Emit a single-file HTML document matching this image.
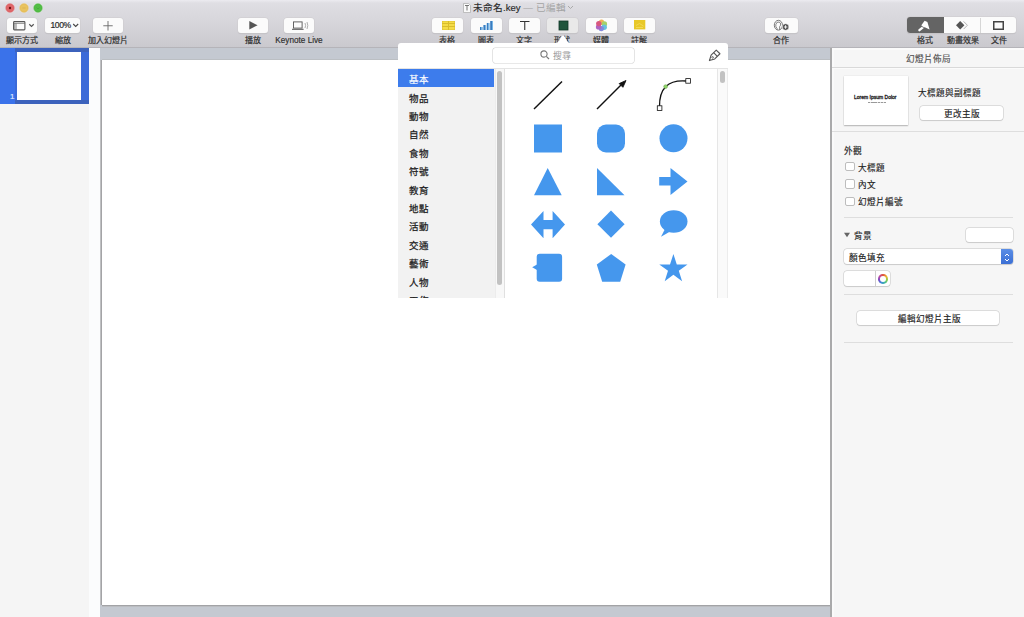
<!DOCTYPE html>
<html lang="zh-TW"><head><meta charset="utf-8">
<style>
*{margin:0;padding:0;box-sizing:border-box}
html,body{width:1024px;height:617px;overflow:hidden;background:#c4c9d1;font-family:"Liberation Sans",sans-serif;color:#2b2b2b}
.a{position:absolute}
#tb{left:0;top:0;width:1024px;height:48px;background:linear-gradient(#eceBf0,#dfdee3 3px,#d7d6db 45%,#cac9ce);border-bottom:1px solid #b5b4b9}
.tl{width:10px;height:10px;border-radius:50%;top:3px}
.btn{background:#fbfbfb;border-radius:3px;box-shadow:0 0 0 0.5px #cfcdd0,0 0.5px 1px rgba(0,0,0,.12);height:15px;top:18px}
.lab{font-size:8px;letter-spacing:.4px;top:33.5px;text-align:center;color:#2e2e2e;-webkit-text-stroke:.2px #2e2e2e;white-space:nowrap}
#side{left:0;top:48px;width:89px;height:569px;background:#f5f5f5}
#strip{left:89px;top:48px;width:11px;height:569px;background:#fbfcfd}
#slide{left:101.5px;top:60px;width:729.5px;height:545px;background:#fff;box-shadow:-1px 0 0 #a4a4a6,-1.8px 0 0 #bdbdbf,0 1px 0 #a2a3a6,0 1.8px 0 #b8babd,0 -1px 0 #bbbfc3}
#rp{left:830px;top:48px;width:194px;height:569px;background:#f6f6f6;border-left:2px solid #aaaaab;box-shadow:inset 2px 0 0 #fafafa}
#pop{left:398px;top:43px;width:330px;height:255px;background:#fff;border-radius:3px 3px 0 0}
.li{left:11px;font-size:9.5px;color:#1e1e1e;-webkit-text-stroke:.25px #1e1e1e}
.sep{height:1px;background:#dedede}
.rt{font-size:8.6px;color:#222;white-space:nowrap;-webkit-text-stroke:.15px #222}
.cb{width:9.5px;height:9.5px;background:#fff;border:.8px solid #bdbdbd;border-radius:2px;left:13.2px}
.pb{background:#fff;border-radius:3px;box-shadow:0 0 0 .5px #c6c6c6,0 .5px 1px rgba(0,0,0,.15)}
</style></head><body>
<!-- toolbar -->
<div id="tb" class="a">
  <svg class="a" style="left:4px;top:2px" width="40" height="12" viewBox="0 0 40 12">
    <circle cx="6" cy="6" r="4.9" fill="#f2c4c6" opacity=".6"/><circle cx="6" cy="6" r="4.2" fill="#e0676a" stroke="#cf5256" stroke-width=".4"/><circle cx="6" cy="6" r="1.2" fill="#6e1414"/>
    <circle cx="20" cy="6" r="4.9" fill="#f4e2b8" opacity=".6"/><circle cx="20" cy="6" r="4.2" fill="#e9c35e" stroke="#d9ac44" stroke-width=".4"/><path d="M18.4 6H21.6" stroke="#b88a2a" stroke-width=".6" opacity=".45"/>
    <circle cx="34" cy="6" r="4.9" fill="#c4eabc" opacity=".6"/><circle cx="34" cy="6" r="4.2" fill="#52bd45" stroke="#42a836" stroke-width=".4"/><path d="M32.6 5.6L34 7 35.4 5.6" fill="none" stroke="#2f7d24" stroke-width=".6" opacity=".45"/>
  </svg>
  <div class="a btn" style="left:7px;width:30px"></div>
  <div class="a lab" style="left:2px;width:40px;letter-spacing:0">顯示方式</div>
  <div class="a btn" style="left:45px;width:35px"></div>
  <div class="a lab" style="left:43px;width:40px">縮放</div>
  <div class="a btn" style="left:93px;width:30px"></div>
  <div class="a lab" style="left:83px;width:50px;letter-spacing:.1px">加入幻燈片</div>

  <div class="a btn" style="left:238px;width:30px"></div>
  <div class="a lab" style="left:233px;width:40px">播放</div>
  <div class="a btn" style="left:284px;width:30px"></div>
  <div class="a lab" style="left:269px;width:60px;letter-spacing:0;font-size:8.2px;top:35.5px;-webkit-text-stroke:.15px #2a2a2a">Keynote Live</div>

  <div class="a btn" style="left:432px;width:31px"></div>
  <div class="a lab" style="left:427px;width:40px">表格</div>
  <div class="a btn" style="left:471px;width:31px"></div>
  <div class="a lab" style="left:466px;width:40px">圖表</div>
  <div class="a btn" style="left:509px;width:31px"></div>
  <div class="a lab" style="left:504px;width:40px">文字</div>
  <div class="a btn" style="left:547px;width:31px;background:#e9e9e9"></div>
  <div class="a lab" style="left:542px;width:40px">形狀</div>
  <div class="a btn" style="left:586px;width:31px"></div>
  <div class="a lab" style="left:581px;width:40px">媒體</div>
  <div class="a btn" style="left:624px;width:31px"></div>
  <div class="a lab" style="left:619px;width:40px">註解</div>

  <div class="a btn" style="left:765px;width:33px"></div>
  <div class="a lab" style="left:761px;width:40px">合作</div>

  <div class="a btn" style="left:907px;width:109px;top:17px;height:16px"></div>
  <div class="a" style="left:907px;top:17px;width:37px;height:16px;background:#646464;border-radius:3px 0 0 3px"></div>
  <div class="a lab" style="left:905px;width:40px">格式</div>
  <div class="a lab" style="left:942.5px;width:40px;letter-spacing:0">動畫效果</div>
  <div class="a lab" style="left:979px;width:40px">文件</div>


  <svg class="a" style="left:13px;top:21px" width="22" height="10" viewBox="0 0 22 10"><rect x=".6" y=".6" width="11.3" height="8.3" rx=".8" fill="none" stroke="#555" stroke-width="1.1"/><path d="M.6 2.4H11.9M3.1 2.4V8.9M1.8 2.4V8.9" stroke="#666" stroke-width=".7"/><path d="M16.3 3.3L18.5 5.4 20.7 3.3" fill="none" stroke="#555" stroke-width="1.2"/></svg>
  <div class="a" style="left:50.5px;top:20px;font-size:8.6px;color:#2a2a2a;-webkit-text-stroke:.2px #2a2a2a;letter-spacing:-.45px">100%</div>
  <svg class="a" style="left:71.5px;top:23px" width="8" height="5" viewBox="0 0 8 5"><path d="M1.2 1L3.7 3.4 6.2 1" fill="none" stroke="#444" stroke-width="1.1"/></svg>
  <svg class="a" style="left:102.5px;top:21px" width="10" height="10" viewBox="0 0 10 10"><path d="M5 0V9.5M.3 4.75H9.7" stroke="#666" stroke-width=".9"/></svg>
  <svg class="a" style="left:249px;top:21px" width="10" height="9" viewBox="0 0 10 9"><path d="M.3 0L8.6 4.2 .3 8.4Z" fill="#555"/></svg>
  <svg class="a" style="left:291px;top:21px" width="20" height="10" viewBox="0 0 20 10"><rect x="2.5" y=".9" width="8.6" height="6.2" fill="none" stroke="#555" stroke-width=".9"/><path d="M1 8.3H12.6" stroke="#555" stroke-width="1"/><path d="M14 2Q15.2 4.5 14 7M16 1Q17.6 4.5 16 8" fill="none" stroke="#999" stroke-width=".8"/></svg>
  <div class="a" style="left:441.5px;top:20.5px;width:13px;height:9px;background:#f4dc48;box-shadow:inset 0 0 0 .5px #dcc030"></div>
  <div class="a" style="left:441.5px;top:23.3px;width:13px;height:.7px;background:#d9bc2c"></div>
  <div class="a" style="left:441.5px;top:26.3px;width:13px;height:.7px;background:#d9bc2c"></div>
  <div class="a" style="left:447.5px;top:20.5px;width:.7px;height:9px;background:#d9bc2c"></div>
  <svg class="a" style="left:480px;top:20.5px" width="13" height="9" viewBox="0 0 13 9"><defs><linearGradient id="bg1" x1="0" x2="1"><stop offset="0" stop-color="#3a7cc0"/><stop offset=".5" stop-color="#3a7cc0"/><stop offset=".5" stop-color="#78b6e6"/></linearGradient></defs><rect x="0" y="6" width="2.8" height="3" fill="url(#bg1)"/><rect x="3.4" y="4" width="2.8" height="5" fill="url(#bg1)"/><rect x="6.8" y="2" width="2.8" height="7" fill="url(#bg1)"/><rect x="10.2" y="0" width="2.8" height="9" fill="url(#bg1)"/></svg>
  <svg class="a" style="left:520px;top:20.5px" width="10" height="9" viewBox="0 0 10 9"><path d="M0 .55H9.5M4.75 .55V9" stroke="#333" stroke-width="1.1"/></svg>
  <svg class="a" style="left:558px;top:20px" width="11" height="11" viewBox="0 0 11 11"><rect x="1" y="1" width="9" height="9" fill="#1f553c" stroke="#0f3626" stroke-width=".8"/></svg>
  <svg class="a" style="left:595px;top:18.5px" width="13" height="13" viewBox="0 0 13 13"><g opacity=".85"><circle cx="6.5" cy="3.3" r="2.7" fill="#f0a63a"/><circle cx="9.4" cy="5" r="2.7" fill="#98cc50"/><circle cx="9.2" cy="8.2" r="2.7" fill="#4fb8d8"/><circle cx="6.3" cy="9.6" r="2.7" fill="#6f78d8"/><circle cx="3.6" cy="7.9" r="2.7" fill="#a24ab8"/><circle cx="3.8" cy="4.6" r="2.7" fill="#d23c6a"/></g></svg>
  <svg class="a" style="left:634px;top:20.3px" width="12" height="10" viewBox="0 0 12 10"><rect x="0" y="0" width="11.3" height="9.4" fill="#e8c828"/><path d="M2 5.5L5.5 3.5 9.5 6M2 7.5H9" fill="none" stroke="#f4dc60" stroke-width=".8"/></svg>
  <svg class="a" style="left:772px;top:19px" width="18" height="13" viewBox="0 0 18 13"><ellipse cx="6.4" cy="6.2" rx="4.1" ry="4.9" fill="none" stroke="#6a6a6a" stroke-width=".9"/><path d="M5 10.8V9.3Q3.4 8 3.8 5.6Q4.4 2.6 7 3Q9 3.5 8.6 6Q8.4 7 7.6 7.6V10.9" fill="none" stroke="#6a6a6a" stroke-width=".8"/><circle cx="13.6" cy="8" r="3.3" fill="#4a4a4a" stroke="#fff" stroke-width=".6"/><path d="M13.6 6.2V9.8M11.8 8H15.4" stroke="#fff" stroke-width=".9"/></svg>
  <svg class="a" style="left:917px;top:19px" width="14" height="13" viewBox="0 0 14 13"><path d="M4.2 6.4L7.6 1.8 10.4 3 12.6 10.6 8.8 8.8Z" fill="#fff"/><path d="M6.8 7.6L2.4 11.2" stroke="#fff" stroke-width="2.3" stroke-linecap="round"/><path d="M4.4 7.2L9.6 10.2" stroke="#646464" stroke-width=".8"/></svg>
  <svg class="a" style="left:954px;top:19px" width="16" height="13" viewBox="0 0 16 13"><path d="M6.2 2L10.4 6.25 6.2 10.5 2 6.25Z" fill="#555"/><path d="M9.6 2.4L13.4 6.25 9.6 10.1" fill="none" stroke="#aaa" stroke-width=".9"/></svg>
  <svg class="a" style="left:993px;top:20.5px" width="11" height="9" viewBox="0 0 11 9"><rect x=".75" y=".75" width="9.5" height="7.5" fill="none" stroke="#444" stroke-width="1.5"/></svg>
  <div class="a" style="left:980px;top:17.5px;width:.7px;height:15px;background:#d6d6d6"></div>
  <svg class="a" style="left:463px;top:3px" width="8" height="10" viewBox="0 0 8 10"><path d="M.5 .5H5.5L7.5 2.5V9.5H.5Z" fill="#fafafa" stroke="#aaa" stroke-width=".7"/><path d="M2 2.5H6M4 2.5V7.5" stroke="#666" stroke-width=".9"/></svg>
  <div class="a" style="left:473px;top:0px;font-size:9.6px;color:#2a2a2a;white-space:nowrap;-webkit-text-stroke:.15px #2a2a2a">未命名.key <span style="color:#a4a4a4;-webkit-text-stroke:0">— 已編輯</span></div>
  <svg class="a" style="left:567px;top:5px" width="7" height="5" viewBox="0 0 7 5"><path d="M1 1L3.5 3.5 6 1" fill="none" stroke="#aaa" stroke-width="1"/></svg>
</div>

<div id="side" class="a">
  <div class="a" style="left:0;top:0;width:89px;height:56px;background:#3a72ea"></div>
  <div class="a" style="left:15px;top:0;width:74px;height:56px;background:#3b6ad8"></div>
  <div class="a" style="left:15px;top:0;width:74px;height:4px;background:#3c62bc"></div>
  <div class="a" style="left:15px;top:52px;width:74px;height:4px;background:#3c62bc"></div>
  <div class="a" style="left:17px;top:4px;width:64px;height:48px;background:#fff"></div>
  <div class="a" style="left:10px;top:44px;font-size:8px;color:#dfe8ff;-webkit-text-stroke:.2px #dfe8ff">1</div>
</div>
<div id="strip" class="a"></div>
<div id="slide" class="a"></div>

<div id="rp" class="a">
  <div class="a rt" style="left:0;width:193px;top:4px;text-align:center;color:#666">幻燈片佈局</div>
  <div class="a" style="left:0;top:0;width:193px;height:1.5px;background:#fbfbfb"></div>
  <div class="a sep" style="left:0;top:18.7px;width:193px;background:#d9d9d9"></div>
  <div class="a" style="left:0;top:19.7px;width:193px;height:1px;background:#fbfbfb"></div>
  <div class="a" style="left:12px;top:28px;width:63.5px;height:48.5px;background:#fff;box-shadow:0 0 1px rgba(0,0,0,.18),0 1px 1.2px rgba(0,0,0,.25)"></div>
  <div class="a" style="left:22px;top:45.5px;font-size:5px;color:#1a1a1a;white-space:nowrap;-webkit-text-stroke:.3px #1a1a1a">Lorem Ipsum Dolor</div>
  <div class="a" style="left:35.5px;top:54.2px;width:18px;height:1.1px;background:repeating-linear-gradient(90deg,#999 0 2.5px,#ddd 2.5px 3.2px)"></div>
  <div class="a rt" style="left:85.5px;top:38px">大標題與副標題</div>
  <div class="a pb" style="left:87.6px;top:57.8px;width:83.7px;height:14px"></div>
  <div class="a rt" style="left:88px;width:84px;top:59px;text-align:center">更改主版</div>
  <div class="a sep" style="left:0;top:83.3px;width:193px"></div>
  <div class="a rt" style="left:12px;top:96px">外觀</div>
  <div class="a cb" style="top:113.9px"></div>
  <div class="a rt" style="left:26px;top:113px">大標題</div>
  <div class="a cb" style="top:131.2px"></div>
  <div class="a rt" style="left:26px;top:130px">內文</div>
  <div class="a cb" style="top:148.6px"></div>
  <div class="a rt" style="left:26px;top:147px">幻燈片編號</div>
  <div class="a sep" style="left:12px;top:168.5px;width:169px"></div>
  <svg class="a" style="left:12px;top:183.5px" width="6" height="6" viewBox="0 0 7 6"><path d="M0 .5H7L3.5 5.5Z" fill="#666"/></svg>
  <div class="a rt" style="left:22px;top:181px">背景</div>
  <div class="a pb" style="left:133.7px;top:180.1px;width:47px;height:14.3px"></div>
  <div class="a pb" style="left:12px;top:201.2px;width:168.7px;height:15.3px"></div>
  <div class="a" style="left:168.7px;top:201.2px;width:12px;height:15.3px;background:linear-gradient(#5b8ee6,#3b6fd4);border-radius:0 3px 3px 0"></div>
  <svg class="a" style="left:170.7px;top:203.5px" width="8" height="11" viewBox="0 0 8 11"><path d="M2 4L4 2 6 4M2 7L4 9 6 7" fill="none" stroke="#fff" stroke-width="1"/></svg>
  <div class="a rt" style="left:17px;top:203px">顏色填充</div>
  <div class="a pb" style="left:11.6px;top:223.3px;width:46.4px;height:15px"></div>
  <div class="a" style="left:43.4px;top:223.3px;width:.7px;height:15px;background:#cfcfcf"></div>
  <div class="a" style="left:46.3px;top:226.2px;width:9.6px;height:9.6px;border-radius:50%;background:conic-gradient(#e0503a,#f0b030,#8fd04a,#40b8a0,#3a8ad8,#7a4ac8,#c04aa0,#e0503a)"></div><div class="a" style="left:48.1px;top:228px;width:6px;height:6px;border-radius:50%;background:#fff"></div>
  <div class="a sep" style="left:12px;top:246px;width:169px"></div>
  <div class="a pb" style="left:25.2px;top:262.5px;width:141.8px;height:14.8px"></div>
  <div class="a rt" style="left:26px;width:142px;top:264px;text-align:center">編輯幻燈片主版</div>
  <div class="a sep" style="left:12px;top:294px;width:169px"></div>
</div>

<svg class="a" style="left:553px;top:34px;z-index:2" width="20" height="10" viewBox="0 0 20 10"><path d="M0 10Q5 10 7.5 4Q10 -1 12.5 4Q15 10 20 10Z" fill="#fff"/></svg>
<div id="pop" class="a">
  <div class="a pb" style="left:95px;top:5px;width:141px;height:14.5px;border-radius:2.5px;box-shadow:0 0 0 .6px #d2d2d2"></div>
  <svg class="a" style="left:142px;top:7px" width="10" height="10" viewBox="0 0 10 10"><circle cx="4" cy="4" r="3.1" fill="none" stroke="#777" stroke-width="1.1"/><path d="M6.3 6.3L9 9" stroke="#777" stroke-width="1.2"/></svg>
  <div class="a" style="left:155px;top:6px;font-size:9px;color:#9a9a9a">搜尋</div>
  <svg class="a" style="left:310px;top:6px" width="14" height="14" viewBox="0 0 14 14"><g transform="translate(1.4 11.6) rotate(-45)" fill="none" stroke="#555" stroke-width="1.1" stroke-linejoin="round"><path d="M0 0L5 -2.6H12.3V2.6H5Z"/><path d="M8.6 -2.6V2.6"/><circle cx="4.6" cy="0" r=".8" stroke-width=".8"/></g></svg>
  <div class="a" style="left:0;top:25px;width:107px;height:230px;background:#f2f2f2;border-top:1px solid #e4e4e4"></div>
  <div class="a" style="left:97px;top:26px;width:9px;height:229px;background:#f8f8f8;border-left:1px solid #ececec"></div>
  <div class="a" style="left:99px;top:28px;width:5px;height:214px;background:#c2c2c2;border-radius:3px"></div>
  <div class="a" style="left:106px;top:25px;width:1px;height:230px;background:#e0e0e0"></div>
  <div class="a" style="left:0;top:26px;width:96px;height:18px;background:#3d7cec"></div>
  <div class="a li" style="top:29px;color:#fff;-webkit-text-stroke:.2px #fff">基本</div>
  <div class="a li" style="top:48px">物品</div>
  <div class="a li" style="top:66px">動物</div>
  <div class="a li" style="top:84px">自然</div>
  <div class="a li" style="top:103px">食物</div>
  <div class="a li" style="top:121px">符號</div>
  <div class="a li" style="top:140px">教育</div>
  <div class="a li" style="top:158px">地點</div>
  <div class="a li" style="top:176px">活動</div>
  <div class="a li" style="top:195px">交通</div>
  <div class="a li" style="top:213px">藝術</div>
  <div class="a li" style="top:232px">人物</div>
  <div class="a li" style="top:250px;height:5px;overflow:hidden">工作</div>
  <div class="a" style="left:96px;top:24.5px;width:234px;height:1px;background:#e4e4e4"></div>
  <div class="a" style="left:319px;top:25.5px;width:11px;height:229.5px;background:#fafafa;border-left:1px solid #e6e6e6;border-right:1px solid #ececec"></div>
  <div class="a" style="left:322px;top:28px;width:5px;height:12px;background:#c2c2c2;border-radius:3px"></div>
  <svg class="a" style="left:107px;top:25px" width="211" height="230" viewBox="505 68 211 230">
    <path d="M534 109L562 81.5" stroke="#111" stroke-width="1.45"/>
    <path d="M597 109L621 85" stroke="#111" stroke-width="1.45"/>
    <path d="M626 80.5L619.2 83.6 622.9 87.3Z" fill="#111" stroke="#111" stroke-width=".9" stroke-linejoin="round"/>
    <path d="M659.5 107Q659 79 686 81" fill="none" stroke="#111" stroke-width="1.3"/>
    <rect x="657.3" y="105.8" width="4.6" height="4.6" fill="#fff" stroke="#111" stroke-width=".8"/>
    <rect x="685.8" y="78.6" width="4.6" height="4.6" fill="#fff" stroke="#111" stroke-width=".8"/>
    <circle cx="665.6" cy="86.6" r="1.9" fill="#8fd46a" stroke="#6aa64a" stroke-width=".5"/>
    <g fill="#4597ed">
      <rect x="534" y="124.5" width="28" height="28"/>
      <rect x="597" y="124.5" width="28" height="28" rx="9"/>
      <circle cx="673.5" cy="138.3" r="14"/>
      <path d="M547.7 168L561.7 195.2 534 195.2Z"/>
      <path d="M597 168L624.5 195.2 597 195.2Z"/>
      <path d="M659.2 177H670.5V168L687.5 181.5 670.5 195V185.5H659.2Z"/>
      <path d="M531 224.6L543.5 211V220H552.6V211L565 224.6 552.6 238.2V229.2H543.5V238.2Z"/>
      <path d="M611 210.6L624.6 224.2 611 237.8 597.4 224.2Z"/>
      <ellipse cx="673.7" cy="221.5" rx="13.8" ry="11.2"/>
      <path d="M665 229L661 236.8 671 231Z"/>
      <rect x="536.7" y="253.7" width="25.4" height="28.1" rx="3"/>
      <path d="M537 264.5L532.2 267.3 537 270Z"/>
      <path d="M611.2 254L625.6 264.6 620.2 281.8H602.2L596.8 264.6Z"/>
      <path d="M673.4 254L676.8 264.4 687.5 264.4 678.8 270.7 682.1 281.3 673.4 274.8 664.7 281.3 668 270.7 659.3 264.4 670 264.4Z"/>
    </g>
  </svg>
</div>
</body></html>
